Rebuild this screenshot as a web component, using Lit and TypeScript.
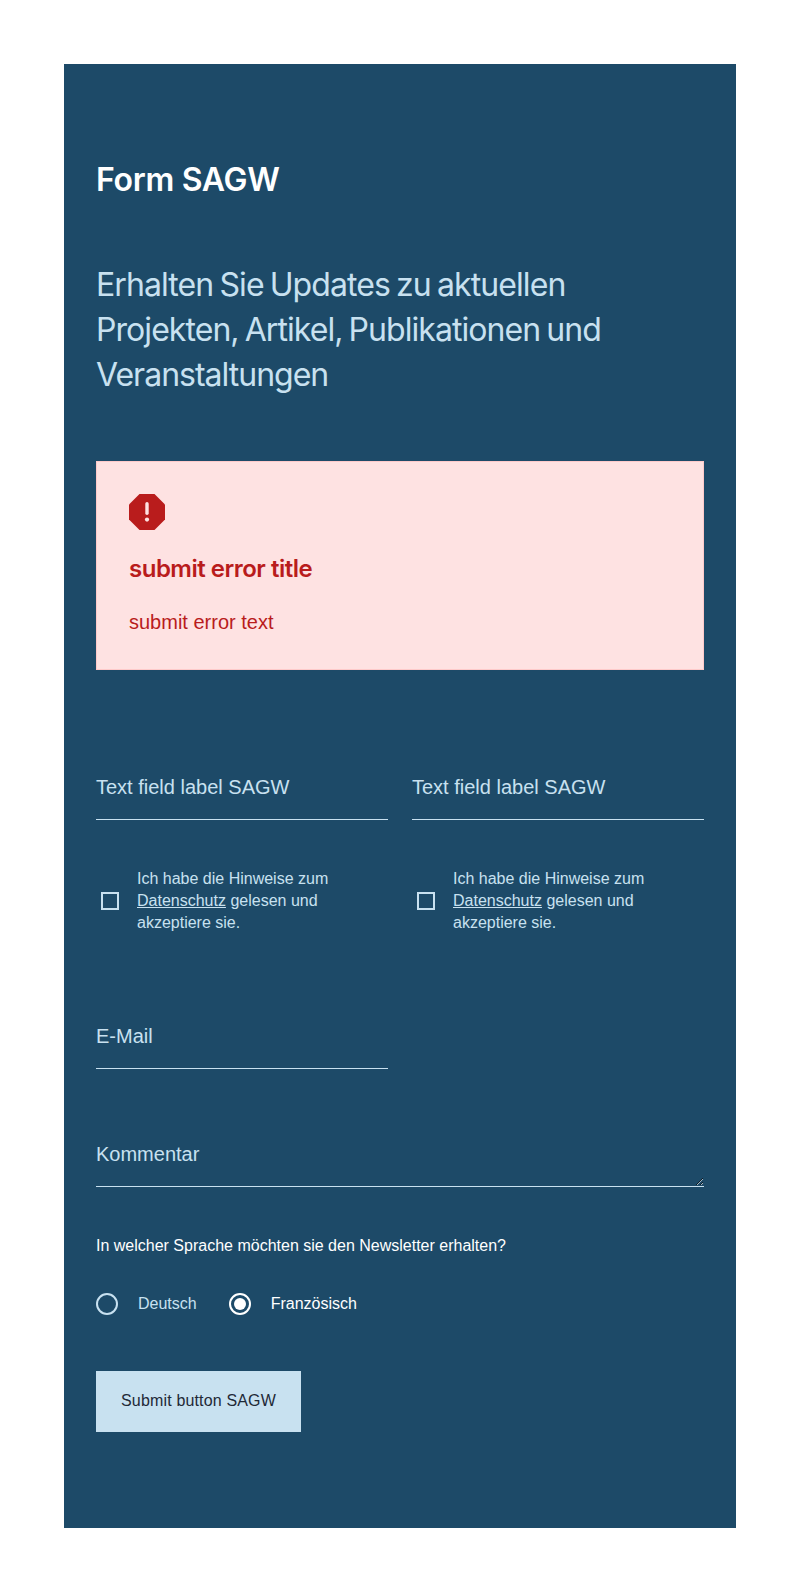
import { LitElement, html, css } from "lit";
import { customElement } from "lit/decorators.js";

@customElement("app-root")
export class AppRoot extends LitElement {
  static styles = css`
    :host { display: block; padding: 64px; background: #fff; font-family: "Liberation Sans", Arial, sans-serif; }
    * { box-sizing: border-box; margin: 0; }
    .card { height: 1464px; padding: 93px 32px 0; background: #1d4a68; color: #c8e1f0; }
    .title { font: 600 32px/45px Inter, sans-serif; color: #fff; letter-spacing: -0.3px; }
    .intro { margin-top: 60px; font: 400 32px/45px Inter, sans-serif; }
    .line { display: block; white-space: nowrap; }
    .l1 { letter-spacing: -0.91px; word-spacing: -2px; }
    .l2 { letter-spacing: -0.94px; word-spacing: -2px; }
    .l3 { letter-spacing: -1px; }
    .error { margin-top: 64px; height: 209px; padding: 32px; background: #fee2e2; border: 1px solid #fecaca; color: #b91c1c; }
    .icon { display: block; width: 36px; height: 36px; }
    .error-title { margin-top: 24px; font: 600 24px/30px Inter, sans-serif; letter-spacing: -0.5px; }
    .error-text { margin-top: 24px; font-size: 20px; line-height: 28px; }
    .grid { display: grid; grid-template-columns: 1fr 1fr; column-gap: 24px; margin-top: 103px; }
    .wide { grid-column: 1 / -1; }
    .field { display: grid; height: 47px; }
    .field > * { grid-area: 1 / 1; }
    .label { font-size: 20px; line-height: 28px; pointer-events: none; z-index: 1; }
    .input { width: 100%; height: 47px; padding: 0; border: 0; border-bottom: 1px solid #c8e1f0; border-radius: 0; background: transparent; color: #fff; font: 20px/28px "Liberation Sans", Arial, sans-serif; outline: none; }
    .area { resize: vertical; display: block; overflow: auto; }
    .check { display: flex; gap: 18px; align-items: flex-start; margin-top: 48px; padding-left: 5px; }
    .box { flex: none; width: 18px; height: 18px; margin-top: 24px; border: 2px solid #c8e1f0; }
    .check-text { width: 210px; font-size: 16px; line-height: 22px; }
    .link { color: inherit; text-decoration: underline; }
    .email { margin-top: 88px; }
    .comment { margin-top: 71px; }
    .question { margin-top: 48px; font-size: 16px; line-height: 22px; color: #fff; }
    .radios { display: flex; gap: 32px; margin-top: 36px; }
    .radio { display: flex; gap: 20px; font-size: 16px; line-height: 22px; }
    .dot { flex: none; width: 22px; height: 22px; }
    .on { color: #fff; }
    .button { display: block; width: 205px; height: 61px; margin-top: 56px; padding: 0 0 2px; border: 0; border-radius: 0; background: #c8e1f0; color: #1f2937; font: 16px/22px "Liberation Sans", Arial, sans-serif; letter-spacing: 0.16px; }
  `;

  private field(label: string, cls = "") {
    return html`<label class="field ${cls}"><span class="label">${label}</span><input class="input" type="text" /></label>`;
  }

  private consent() {
    return html`<div class="check"><span class="box"></span>
      <p class="check-text">Ich habe die Hinweise zum <a class="link">Datenschutz</a> gelesen und akzeptiere sie.</p></div>`;
  }

  private radio(label: string, on: boolean) {
    return html`<div class="radio ${on ? "on" : ""}">
      <svg class="dot" viewBox="0 0 22 22">
        <circle cx="11" cy="11" r="10" fill="none" stroke="currentColor" stroke-width="2" />
        <circle cx="11" cy="11" r="6" fill=${on ? "currentColor" : "none"} />
      </svg><span>${label}</span></div>`;
  }

  render() {
    return html`<main class="card">
      <h1 class="title">Form SAGW</h1>
      <p class="intro">
        <span class="line l1">Erhalten Sie Updates zu aktuellen</span>
        <span class="line l2">Projekten, Artikel, Publikationen und</span>
        <span class="line l3">Veranstaltungen</span>
      </p>
      <section class="error">
        <svg class="icon" viewBox="0 0 36 36">
          <path fill="#b91c1c" d="M10.5 0h15L36 10.5v15L25.5 36h-15L0 25.5v-15z" />
          <path stroke="#fee2e2" stroke-width="3.4" stroke-linecap="round" d="M18 9.8v9.4" />
          <circle cx="18" cy="25.6" r="2.1" fill="#fee2e2" />
        </svg>
        <h2 class="error-title">submit error title</h2>
        <p class="error-text">submit error text</p>
      </section>
      <div class="grid">
        ${this.field("Text field label SAGW")}${this.field("Text field label SAGW")}
        ${this.consent()}${this.consent()}
        ${this.field("E-Mail", "email")}
        <label class="field wide comment"><span class="label">Kommentar</span><textarea class="input area"></textarea></label>
      </div>
      <p class="question">In welcher Sprache möchten sie den Newsletter erhalten?</p>
      <div class="radios">${this.radio("Deutsch", false)}${this.radio("Französisch", true)}</div>
      <button class="button">Submit button SAGW</button>
    </main>`;
  }
}
